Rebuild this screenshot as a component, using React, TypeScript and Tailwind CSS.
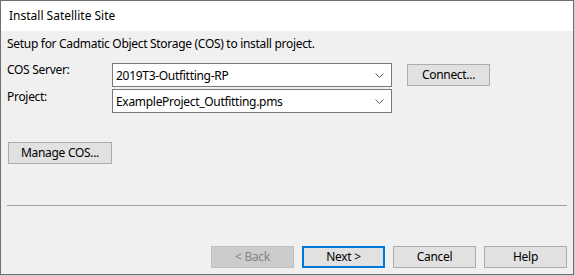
import React from "react";

const font = { fontFamily: '"Noto Sans", "Open Sans", sans-serif' };

function Chevron() {
  return (
    <svg width="9" height="5" viewBox="0 0 9 5" className="block">
      <path d="M0.5 0.5 L4.5 4.5 L8.5 0.5" fill="none" stroke="#5a5a5a" strokeWidth="1" />
    </svg>
  );
}

function Combo({ value }: { value: string }) {
  return (
    <div className="w-[280px] h-[24px] border border-[#7a7a7a] bg-white flex items-center pl-[3px] pr-[7px]">
      <span className="flex-1 leading-[16px] pt-[4px] self-start">{value}</span>
      <Chevron />
    </div>
  );
}

function Btn({
  children,
  className = "",
}: {
  children: React.ReactNode;
  className?: string;
}) {
  return (
    <div
      className={
        "w-[83px] h-[22px] flex items-center justify-center leading-[16px] " +
        className
      }
    >
      {children}
    </div>
  );
}

export default function App() {
  return (
    <div
      className="w-[575px] h-[276px] bg-[#cfcfcf] text-[12px] text-black overflow-hidden"
      style={font}
    >
      <div className="w-[574px] h-[275px] border border-[#6f6f6f] flex flex-col">
        <div className="h-[30px] bg-white pl-[8px] pt-[7px] leading-[16px]">
          Install Satellite Site
        </div>
        <div className="flex-1 bg-[#f0f0f0] pl-[6px] pt-[5px] flex flex-col tracking-[-0.3px]">
          <div className="leading-[16px]">
            Setup for Cadmatic Object Storage (COS) to install project.
          </div>
          <div className="flex items-start mt-[11px]">
            <div className="w-[105px] leading-[16px] -mt-[1px]">COS Server:</div>
            <Combo value="2019T3-Outfitting-RP" />
            <Btn className="ml-[15px] mt-[1px] bg-[#e1e1e1] border border-[#adadad]">
              Connect...
            </Btn>
          </div>
          <div className="flex items-start mt-[2px]">
            <div className="w-[105px] leading-[16px]">Project:</div>
            <Combo value="ExampleProject_Outfitting.pms" />
          </div>
          <Btn className="w-[104px] ml-[1px] mt-[29px] bg-[#e1e1e1] border border-[#adadad]">
            Manage COS...
          </Btn>
          <div className="w-[560px] h-px bg-[#a0a0a0] mt-[41px]" />
          <div className="flex gap-[8px] mt-[40px] ml-[204px]">
            <Btn className="bg-[#cccccc] border border-[#bfbfbf] text-[#838383]">
              &lt; Back
            </Btn>
            <Btn className="bg-[#e1e1e1] border-2 border-[#0078d7]">Next &gt;</Btn>
            <Btn className="bg-[#e1e1e1] border border-[#adadad]">Cancel</Btn>
            <Btn className="bg-[#e1e1e1] border border-[#adadad]">Help</Btn>
          </div>
        </div>
      </div>
    </div>
  );
}
